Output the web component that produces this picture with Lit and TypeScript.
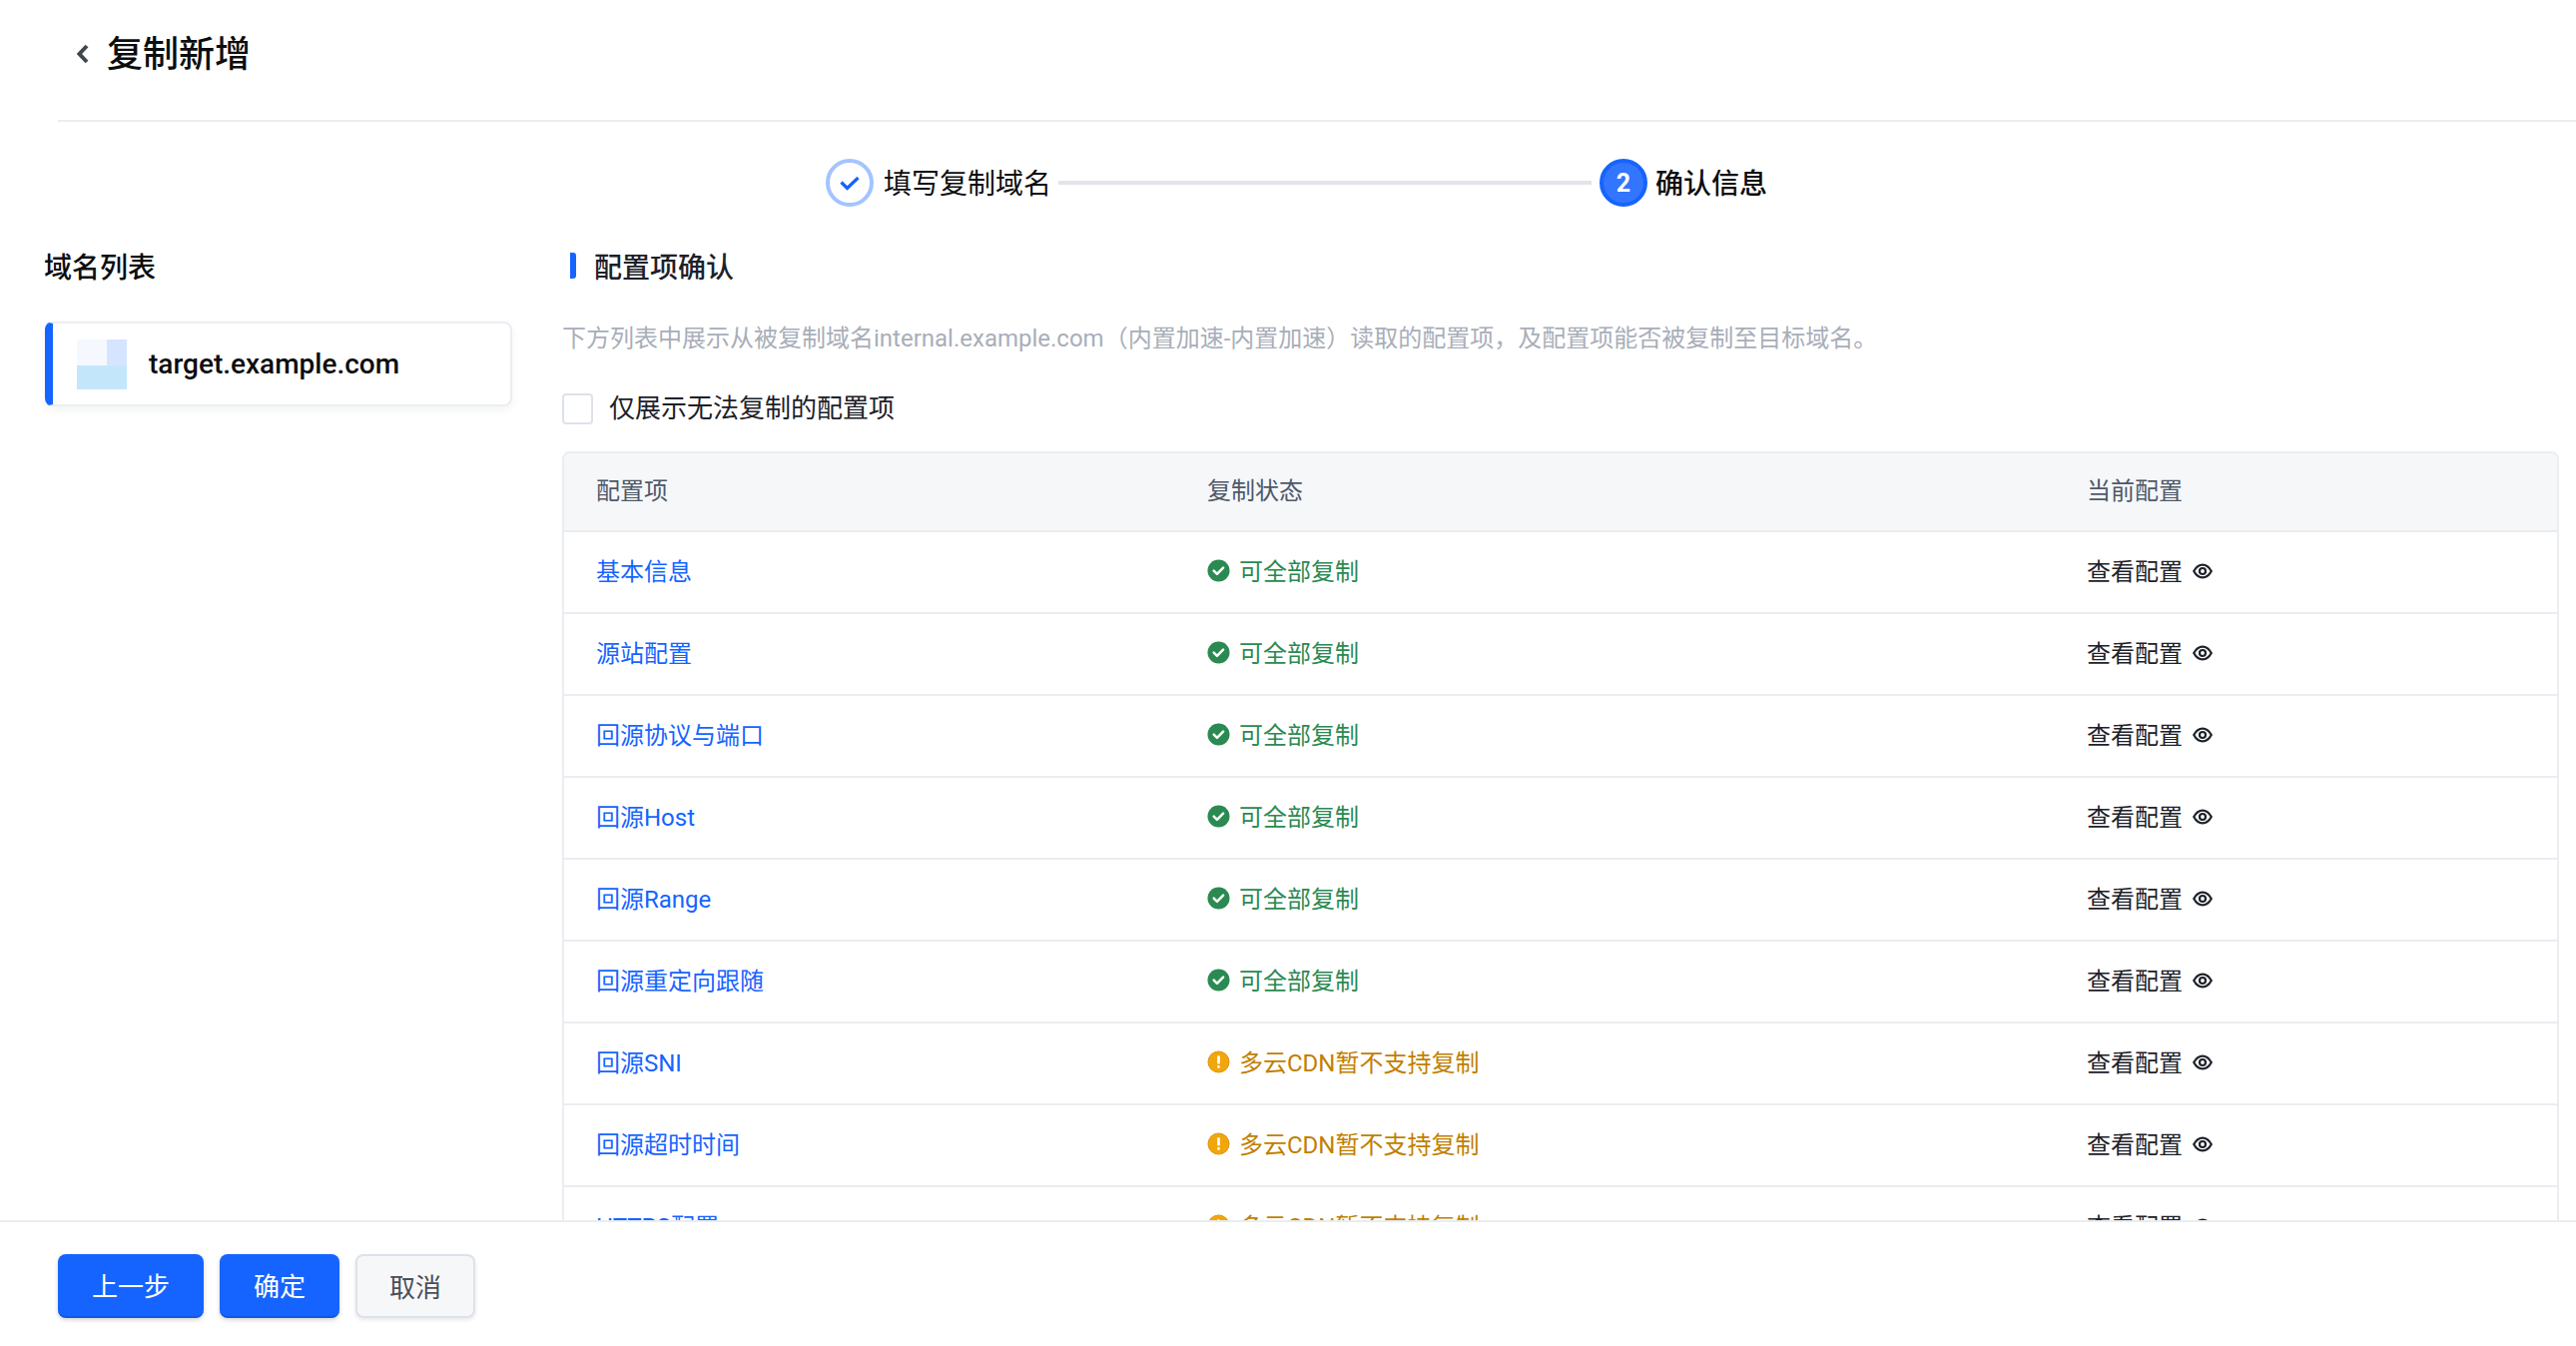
import { css, html, LitElement } from "lit";
import { customElement } from "lit/decorators.js";

type Row = { name: string; ok: boolean };

const rows: Row[] = [
  { name: "基本信息", ok: true },
  { name: "源站配置", ok: true },
  { name: "回源协议与端口", ok: true },
  { name: "回源Host", ok: true },
  { name: "回源Range", ok: true },
  { name: "回源重定向跟随", ok: true },
  { name: "回源SNI", ok: false },
  { name: "回源超时时间", ok: false },
  { name: "HTTPS配置", ok: false },
];

const okIcon = html`<svg class="status-icon" viewBox="0 0 24 24">
  <circle cx="12" cy="12" r="11.5" fill="#2b8a52" />
  <path d="M7 12.2l3.4 3.4 6.4-6.6" fill="none" stroke="#fff" stroke-width="2.6" stroke-linecap="round" stroke-linejoin="round" />
</svg>`;

const warnIcon = html`<svg class="status-icon" viewBox="0 0 24 24">
  <circle cx="12" cy="12" r="11" fill="#f2a60d" stroke="#d9920a" stroke-width="1" />
  <rect x="10.6" y="5.5" width="2.8" height="8.5" rx="1" fill="#fff" />
  <rect x="10.6" y="15.6" width="2.8" height="2.9" rx="1" fill="#fff" />
</svg>`;

const eyeIcon = html`<svg class="eye" viewBox="0 0 20 16">
  <path d="M1.2 8C3.4 4 6.4 1.6 10 1.6S16.6 4 18.8 8C16.6 12 13.6 14.4 10 14.4S3.4 12 1.2 8z" fill="none" stroke="#1d2129" stroke-width="2.2" stroke-linejoin="round" />
  <circle cx="10" cy="8" r="3" fill="none" stroke="#1d2129" stroke-width="2.2" />
</svg>`;

@customElement("app-root")
class AppRoot extends LitElement {
  static styles = css`
    :host {
      display: flex;
      flex-direction: column;
      height: 100vh;
      overflow: hidden;
      background: #fff;
      color: #1d2129;
      font-family: Roboto, "Noto Sans CJK SC", sans-serif;
    }

    .header {
      flex: none;
      display: flex;
      align-items: center;
      gap: 18px;
      height: 107px;
      padding: 0 0 13px 18px;
      margin-left: 58px;
      border-bottom: 2px solid #eaedf1;
      box-sizing: content-box;
    }

    .back {
      width: 13px;
      height: 20px;
      margin-top: 1px;
    }

    .title {
      font-size: 36px;
      font-weight: 500;
      color: #0c0d0e;
      margin-top: -6px;
    }

    .steps {
      flex: none;
      display: flex;
      align-items: center;
      height: 122px;
      padding-left: 827px;
    }

    .step {
      display: flex;
      align-items: center;
      gap: 10px;
      font-size: 28px;
      color: #0c0d0e;
    }

    .step.current {
      gap: 8px;
      font-weight: 500;
    }

    .label {
      margin-top: -3px;
    }

    .circle {
      width: 48px;
      height: 48px;
      box-sizing: border-box;
      border-radius: 50%;
      display: flex;
      align-items: center;
      justify-content: center;
    }

    .circle.done {
      border: 4px solid #a3c4ff;
      background: #fff;
    }

    .circle.now {
      border: 4px solid #1664ff;
      background: #3275ff;
      color: #fff;
      font-size: 25px;
      font-weight: 700;
    }

    .circle svg {
      width: 22px;
      height: 18px;
    }

    .line {
      width: 534px;
      height: 4px;
      margin: 0 8px 0 7px;
      background: #e3e4e9;
    }

    .body {
      flex: 1;
      min-height: 0;
      display: flex;
      overflow: hidden;
    }

    .side {
      flex: none;
      width: 469px;
      margin-left: 44px;
      margin-right: 50px;
    }

    .side-title {
      font-size: 28px;
      font-weight: 500;
      line-height: 40px;
      margin-top: 5px;
      color: #0c0d0e;
    }

    .domain {
      display: flex;
      align-items: center;
      height: 85px;
      box-sizing: border-box;
      margin-top: 33px;
      margin-left: 1px;
      border: 2px solid #eaedf1;
      border-left: 8px solid #1664ff;
      border-radius: 8px;
      box-shadow: 0 4px 10px rgba(29, 33, 41, 0.05);
      padding-left: 24px;
      font-size: 28px;
      font-weight: 500;
      color: #0c0d0e;
    }

    .thumb {
      flex: none;
      width: 50px;
      height: 50px;
      margin-right: 22px;
      display: grid;
      grid-template-columns: 30px 20px;
      grid-template-rows: 26px 24px;
    }

    .thumb i:nth-child(1) {
      background: #f5f9ff;
    }

    .thumb i:nth-child(2) {
      background: #d6e5ff;
    }

    .thumb i:nth-child(3) {
      grid-column: 1 / 3;
      background: #c4e6fb;
    }

    .main {
      flex: 1;
      min-width: 0;
      margin-right: 17px;
      overflow: hidden;
    }

    .section-title {
      display: flex;
      align-items: center;
      gap: 18px;
      height: 40px;
      margin-top: 2px;
      font-size: 28px;
      font-weight: 500;
      color: #1d2129;
    }

    .section-title::before {
      content: "";
      width: 6px;
      height: 26px;
      margin-left: 8px;
      background: #1664ff;
      border-radius: 0 3px 3px 0;
    }

    .desc {
      margin-top: 35px;
      font-size: 24px;
      line-height: 36px;
      color: #a8aeb9;
    }

    .filter {
      display: flex;
      align-items: center;
      gap: 16px;
      margin-top: 34px;
      font-size: 26px;
      line-height: 36px;
    }

    .check {
      width: 31px;
      height: 31px;
      box-sizing: border-box;
      border: 2px solid #dde2e9;
      border-radius: 4px;
    }

    .table {
      margin-top: 25px;
      border: 2px solid #eaedf1;
      border-bottom: 0;
      border-radius: 8px 8px 0 0;
    }

    .tr {
      display: grid;
      grid-template-columns: 612px 881px 1fr;
      align-items: center;
      height: 82px;
      box-sizing: border-box;
      border-bottom: 2px solid #eaedf1;
      font-size: 24px;
    }

    .tr.head {
      height: 79px;
      background: #f6f7f9;
      color: #4e5969;
      border-radius: 6px 6px 0 0;
    }

    .tr > div {
      padding: 0 0 6px 32px;
      display: flex;
      align-items: center;
    }

    .link {
      color: #1664ff;
    }

    .status {
      gap: 9px;
    }

    .status.ok {
      color: #2b8a52;
    }

    .status.warn {
      color: #c17f00;
    }

    .status-icon {
      flex: none;
      width: 23px;
      height: 23px;
      margin-top: 3px;
    }

    .view {
      gap: 10px;
    }

    .eye {
      width: 20px;
      height: 16px;
      margin-top: 3px;
    }

    .footer {
      flex: none;
      height: 126px;
      box-sizing: border-box;
      border-top: 2px solid #eaedf1;
      display: flex;
      align-items: flex-start;
      gap: 16px;
      padding: 32px 0 0 58px;
    }

    .btn {
      height: 64px;
      padding: 0 34px 2px;
      box-sizing: border-box;
      border-radius: 8px;
      border: 0;
      font: inherit;
      font-size: 26px;
      display: flex;
      align-items: center;
    }

    .btn.primary {
      background: #1664ff;
      border-bottom: 2px solid #1257dd;
      color: #fff;
      box-shadow: 0 2px 4px rgba(29, 33, 41, 0.2);
    }

    .btn.plain {
      background: #f6f7f9;
      border: 2px solid #dde2e9;
      color: #4b4f57;
      padding: 0 32px 2px;
      box-shadow: 0 2px 4px rgba(29, 33, 41, 0.1);
    }
  `;

  render() {
    return html`
      <div class="header">
        <svg class="back" viewBox="0 0 13 20">
          <path d="M11 2L3.5 10l7.5 8" fill="none" stroke="#41464f" stroke-width="4" />
        </svg>
        <span class="title">复制新增</span>
      </div>

      <div class="steps">
        <div class="step">
          <span class="circle done">
            <svg viewBox="0 0 22 18">
              <path d="M2.5 8.5l6 6L19.5 4" fill="none" stroke="#1664ff" stroke-width="3.2" />
            </svg>
          </span>
          <span class="label">填写复制域名</span>
        </div>
        <span class="line"></span>
        <div class="step current">
          <span class="circle now">2</span>
          <span class="label">确认信息</span>
        </div>
      </div>

      <div class="body">
        <div class="side">
          <div class="side-title">域名列表</div>
          <div class="domain">
            <span class="thumb"><i></i><i></i><i></i></span>
            target.example.com
          </div>
        </div>
        <div class="main">
          <div class="section-title">配置项确认</div>
          <div class="desc">下方列表中展示从被复制域名internal.example.com（内置加速-内置加速）读取的配置项，及配置项能否被复制至目标域名。</div>
          <label class="filter"><span class="check"></span>仅展示无法复制的配置项</label>
          <div class="table">
            <div class="tr head">
              <div>配置项</div>
              <div>复制状态</div>
              <div>当前配置</div>
            </div>
            ${rows.map(
              (r) => html`
                <div class="tr">
                  <div class="link">${r.name}</div>
                  <div class="status ${r.ok ? "ok" : "warn"}">
                    ${r.ok ? okIcon : warnIcon}
                    ${r.ok ? "可全部复制" : "多云CDN暂不支持复制"}
                  </div>
                  <div class="view">查看配置 ${eyeIcon}</div>
                </div>
              `
            )}
          </div>
        </div>
      </div>

      <div class="footer">
        <button class="btn primary">上一步</button>
        <button class="btn primary">确定</button>
        <button class="btn plain">取消</button>
      </div>
    `;
  }
}
